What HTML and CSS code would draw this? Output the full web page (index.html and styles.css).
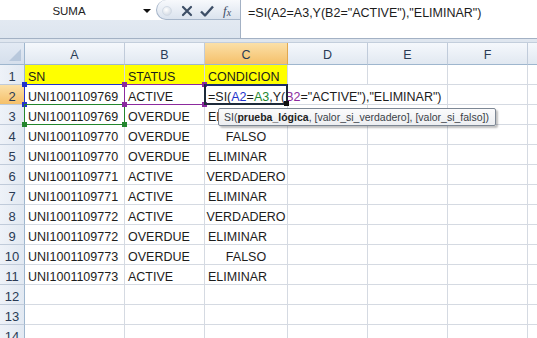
FILE: index.html
```html
<!DOCTYPE html>
<html lang="es">
<head>
    <meta charset="UTF-8">
    <title>Hoja de cálculo - SI</title>
    <link rel="stylesheet" href="styles.css">
</head>
<body>

    <!-- Barra de fórmulas -->
    <div class="formula-bar">
        <div class="fb-left">
            <div class="fb-top">
                <div class="name-box">SUMA</div>
                <div class="name-drop"><span class="tri"></span></div>
                <div class="fb-buttons">
                    <span class="ball"></span>
                    <svg class="btn-icon" width="14" height="14" viewBox="0 0 14 14"><path d="M3 3 L11 11 M11 3 L3 11" stroke="#3d4e66" stroke-width="2.2" stroke-linecap="round"/></svg>
                    <svg class="btn-icon" width="16" height="14" viewBox="0 0 16 14"><path d="M2 7.5 L6 11.5 L14 2.5" stroke="#3d4e66" stroke-width="2.4" fill="none" stroke-linejoin="round"/></svg>
                    <span class="fx">f<sub>x</sub></span>
                </div>
            </div>
        </div>
        <div class="fb-input">=SI(A2=A3,Y(B2="ACTIVE"),"ELIMINAR")</div>
    </div>
    <div class="fb-gap"></div>

    <!-- Hoja -->
    <div class="sheet">
        <div class="corner"><span class="corner-tri"></span></div>
        <div class="col-head">A</div>
        <div class="col-head">B</div>
        <div class="col-head active">C</div>
        <div class="col-head">D</div>
        <div class="col-head">E</div>
        <div class="col-head">F</div>
        <div class="col-head last"></div>

        <div class="row-head">1</div>
        <div class="cell yellow">SN</div>
        <div class="cell yellow">STATUS</div>
        <div class="cell yellow">CONDICION</div>
        <div class="cell"></div><div class="cell"></div><div class="cell"></div><div class="cell last"></div>

        <div class="row-head active">2</div>
        <div class="cell">UNI1001109769</div>
        <div class="cell">ACTIVE</div>
        <div class="cell edit">=SI(<span class="ref-a2">A2</span>=<span class="ref-a3">A3</span>,Y(<span class="ref-b2">B2</span>="ACTIVE"),"ELIMINAR")</div>
        <div class="cell"></div><div class="cell last"></div>

        <div class="row-head">3</div>
        <div class="cell">UNI1001109769</div>
        <div class="cell">OVERDUE</div>
        <div class="cell">ELIMINAR</div>
        <div class="cell"></div><div class="cell"></div><div class="cell"></div><div class="cell last"></div>

        <div class="row-head">4</div>
        <div class="cell">UNI1001109770</div>
        <div class="cell">OVERDUE</div>
        <div class="cell center">FALSO</div>
        <div class="cell"></div><div class="cell"></div><div class="cell"></div><div class="cell last"></div>

        <div class="row-head">5</div>
        <div class="cell">UNI1001109770</div>
        <div class="cell">OVERDUE</div>
        <div class="cell">ELIMINAR</div>
        <div class="cell"></div><div class="cell"></div><div class="cell"></div><div class="cell last"></div>

        <div class="row-head">6</div>
        <div class="cell">UNI1001109771</div>
        <div class="cell">ACTIVE</div>
        <div class="cell center">VERDADERO</div>
        <div class="cell"></div><div class="cell"></div><div class="cell"></div><div class="cell last"></div>

        <div class="row-head">7</div>
        <div class="cell">UNI1001109771</div>
        <div class="cell">ACTIVE</div>
        <div class="cell">ELIMINAR</div>
        <div class="cell"></div><div class="cell"></div><div class="cell"></div><div class="cell last"></div>

        <div class="row-head">8</div>
        <div class="cell">UNI1001109772</div>
        <div class="cell">ACTIVE</div>
        <div class="cell center">VERDADERO</div>
        <div class="cell"></div><div class="cell"></div><div class="cell"></div><div class="cell last"></div>

        <div class="row-head">9</div>
        <div class="cell">UNI1001109772</div>
        <div class="cell">OVERDUE</div>
        <div class="cell">ELIMINAR</div>
        <div class="cell"></div><div class="cell"></div><div class="cell"></div><div class="cell last"></div>

        <div class="row-head">10</div>
        <div class="cell">UNI1001109773</div>
        <div class="cell">OVERDUE</div>
        <div class="cell center">FALSO</div>
        <div class="cell"></div><div class="cell"></div><div class="cell"></div><div class="cell last"></div>

        <div class="row-head">11</div>
        <div class="cell">UNI1001109773</div>
        <div class="cell">ACTIVE</div>
        <div class="cell">ELIMINAR</div>
        <div class="cell"></div><div class="cell"></div><div class="cell"></div><div class="cell last"></div>

        <div class="row-head">12</div>
        <div class="cell"></div><div class="cell"></div><div class="cell"></div><div class="cell"></div><div class="cell"></div><div class="cell"></div><div class="cell last"></div>

        <div class="row-head">13</div>
        <div class="cell"></div><div class="cell"></div><div class="cell"></div><div class="cell"></div><div class="cell"></div><div class="cell"></div><div class="cell last"></div>

        <div class="row-head">14</div>
        <div class="cell"></div><div class="cell"></div><div class="cell"></div><div class="cell"></div><div class="cell"></div><div class="cell"></div><div class="cell last"></div>

        <!-- Rangos resaltados por la fórmula -->
        <div class="range range-a2"><i class="h tl"></i><i class="h tr"></i><i class="h bl"></i><i class="h br"></i></div>
        <div class="range range-a3"><i class="h bl"></i><i class="h br"></i></div>
        <div class="range range-b2"><i class="h tl"></i><i class="h tr"></i><i class="h bl"></i><i class="h br"></i></div>
        <div class="range range-c2"><i class="h br"></i></div>

        <!-- Ayuda de la función -->
        <div class="tooltip">SI(<b>prueba_lógica</b>, [valor_si_verdadero], [valor_si_falso])</div>
    </div>

</body>
</html>
```

FILE: styles.css
```css
* {
    box-sizing: border-box;
}
body {
    margin: 0;
    padding: 0;
    background-color: #ffffff;
    font-family: 'Liberation Sans', Arial, sans-serif;
    font-size: 12.5px;
    color: #1c1c1c;
    overflow: hidden;
}

/* Barra de fórmulas */
.formula-bar {
    display: flex;
    height: 39px;
    border-bottom: 1px solid #a3b1c4;
}
.fb-left {
    width: 240px;
    background: linear-gradient(#e9eef5, #dde5ef);
}
.fb-top {
    display: flex;
    height: 20px;
    background-color: #ffffff;
}
.name-box {
    width: 138px;
    text-align: center;
    line-height: 22px;
    font-size: 11.5px;
    color: #222;
}
.name-drop {
    width: 18px;
    display: flex;
    justify-content: center;
    padding-top: 9px;
}
.tri {
    width: 0;
    height: 0;
    border-left: 4px solid transparent;
    border-right: 4px solid transparent;
    border-top: 4px solid #111;
}
.fb-buttons {
    flex: 1;
    display: flex;
    align-items: center;
    gap: 5px;
    padding-left: 5px;
    padding-top: 2px;
    border: 1px solid #a7b6ca;
    border-right: none;
    border-top: none;
    border-radius: 10px 0 0 10px;
    background: linear-gradient(#f7f9fc, #dbe3ee);
}
.ball {
    width: 10px;
    height: 10px;
    border-radius: 50%;
    background: radial-gradient(circle at 40% 35%, #ffffff, #c9d2de);
    border: 1px solid #d2dae5;
    margin-right: 3px;
}
.fx {
    font-family: 'Liberation Serif', serif;
    font-style: italic;
    font-size: 13px;
    color: #3d4e66;
    margin-left: 3px;
}
.fx sub {
    font-size: 10px;
    vertical-align: -1px;
}
.fb-input {
    flex: 1;
    border-left: 1px solid #a3b1c4;
    padding: 6px 0 0 7px;
    font-size: 12.5px;
    color: #1c1c1c;
}
.fb-gap {
    height: 4px;
    background-color: #dfe6ef;
    border-bottom: 1px solid #c3cedc;
}

/* Hoja */
.sheet {
    position: relative;
    display: grid;
    grid-template-columns: 25px 100px 80px 83px 80px 80px 80px 9px;
    grid-template-rows: 22px repeat(14, 20px);
}
.corner {
    position: relative;
    background: linear-gradient(#e3eaf4, #d5dfec);
    border-right: 1px solid #9eb6ce;
    border-bottom: 1px solid #9eb6ce;
}
.corner-tri {
    position: absolute;
    right: 3px;
    bottom: 3px;
    width: 0;
    height: 0;
    border-left: 12px solid transparent;
    border-bottom: 12px solid #b8c8dc;
}
.col-head {
    background: linear-gradient(#f5f8fc, #e1e8f1);
    border-right: 1px solid #c0cbda;
    border-bottom: 1px solid #9eb6ce;
    text-align: center;
    padding-top: 3px;
    line-height: 19px;
    color: #2a3b55;
}
.col-head.active {
    background: linear-gradient(#fbe0a8, #f5c06a);
    border-right-color: #e0a850;
}
.row-head {
    background: linear-gradient(90deg, #eef2f8, #e2e9f2);
    border-right: 1px solid #9eb6ce;
    border-bottom: 1px solid #c0cbda;
    text-align: center;
    padding-top: 4px;
    line-height: 16px;
    font-size: 13px;
    color: #2a3b55;
}
.row-head.active {
    background: linear-gradient(#fbe0a8, #f5c06a);
}
.cell {
    border-right: 1px solid #d5dae2;
    border-bottom: 1px solid #d5dae2;
    padding: 4px 0 0 3px;
    line-height: 17px;
    white-space: nowrap;
    overflow: hidden;
}
.cell.last, .col-head.last {
    border-right: none;
}
.cell.yellow {
    background-color: #ffff00;
}
.cell.center {
    text-align: center;
    padding-left: 0;
}
.cell.edit {
    grid-column: span 3;
    overflow: visible;
}
.ref-a2 { color: #2233cc; }
.ref-a3 { color: #23862e; }
.ref-b2 { color: #8b2a9e; }

/* Rangos resaltados */
.range {
    position: absolute;
    height: 21px;
    border: 1px solid;
}
.range-a2 { left: 24px; top: 41px; width: 101px; border-color: #2233cc; color: #2233cc; }
.range-a3 { left: 24px; top: 61px; width: 101px; border-color: #23862e; color: #23862e; }
.range-b2 { left: 124px; top: 41px; width: 81px; border-color: #8b2a9e; color: #8b2a9e; }
.range-c2 {
    left: 204px;
    top: 41px;
    width: 84px;
    height: 21px;
    border: 2px solid #1d2a3a;
    border-top-color: #1d2d6a;
    color: #111;
}
.h {
    position: absolute;
    width: 5px;
    height: 5px;
    background-color: currentColor;
}
.h.tl { left: -3px; top: -3px; }
.h.tr { right: -3px; top: -3px; }
.h.bl { left: -3px; bottom: -3px; }
.h.br { right: -3px; bottom: -3px; }

/* Ayuda de la función */
.tooltip {
    position: absolute;
    left: 218px;
    top: 65px;
    padding: 2px 6px 2px 5px;
    background: linear-gradient(#fbfbfc, #eceef1);
    border: 1px solid #7d8794;
    border-radius: 2px;
    box-shadow: 2px 2px 2px rgba(0, 0, 0, 0.25);
    font-size: 10.5px;
    color: #3a3f47;
    white-space: nowrap;
}
.tooltip b {
    color: #222;
}
```
